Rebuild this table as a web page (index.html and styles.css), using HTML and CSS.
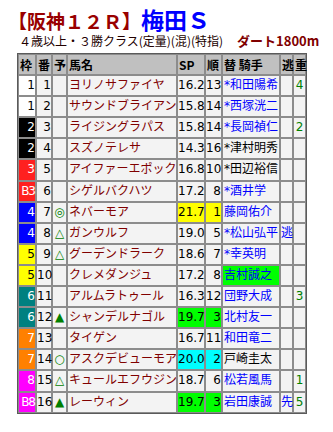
FILE: index.html
```html
<!DOCTYPE html>
<html lang="ja">
<head>
<meta charset="utf-8">
<title>梅田S</title>
<link rel="stylesheet" href="styles.css">
</head>
<body>
<div class="title"><span class="race">【阪神１２Ｒ】</span><span class="rname">梅田Ｓ</span></div>
<div class="sub"><span class="cond">４歳以上・３勝クラス(定量)(混)(特指)</span><span class="dist">ダート1800m</span></div>
<table class="card">
<thead>
<tr>
<th class="c-w">枠</th><th class="c-n">番</th><th class="c-m">予</th><th class="c-h">馬名</th><th class="c-sp">SP</th><th class="c-r">順</th><th class="c-j">替 騎手</th><th class="c-e">逃</th><th class="c-g">重</th>
</tr>
</thead>
<tbody>
<tr><td class="wk w1">1</td><td class="num">1</td><td class="mk"></td><td class="nm">ヨリノサファイヤ</td><td class="num">16.2</td><td class="num">13</td><td class="jk">*和田陽希</td><td class="es"></td><td class="gr">4</td></tr>
<tr><td class="wk w1">1</td><td class="num">2</td><td class="mk"></td><td class="nm">サウンドブライアン</td><td class="num">15.8</td><td class="num">14</td><td class="jk">*西塚洸二</td><td class="es"></td><td class="gr"></td></tr>
<tr><td class="wk w2">2</td><td class="num">3</td><td class="mk"></td><td class="nm">ライジングラパス</td><td class="num">15.8</td><td class="num">14</td><td class="jk">*長岡禎仁</td><td class="es"></td><td class="gr">2</td></tr>
<tr><td class="wk w2">2</td><td class="num">4</td><td class="mk"></td><td class="nm">スズノテレサ</td><td class="num">14.3</td><td class="num">16</td><td class="jk bk">*津村明秀</td><td class="es"></td><td class="gr"></td></tr>
<tr><td class="wk w3">3</td><td class="num">5</td><td class="mk"></td><td class="nm">アイファーエポック</td><td class="num">16.8</td><td class="num">10</td><td class="jk bk">*田辺裕信</td><td class="es"></td><td class="gr"></td></tr>
<tr><td class="wk w3 b">B3</td><td class="num">6</td><td class="mk"></td><td class="nm">シゲルバクハツ</td><td class="num">17.2</td><td class="num">8</td><td class="jk">*酒井学</td><td class="es"></td><td class="gr"></td></tr>
<tr><td class="wk w4">4</td><td class="num">7</td><td class="mk">◎</td><td class="nm">ネバーモア</td><td class="num hy">21.7</td><td class="num hy">1</td><td class="jk">藤岡佑介</td><td class="es"></td><td class="gr"></td></tr>
<tr><td class="wk w4">4</td><td class="num">8</td><td class="mk">△</td><td class="nm">ガンウルフ</td><td class="num">19.0</td><td class="num">5</td><td class="jk">*松山弘平</td><td class="es">逃</td><td class="gr"></td></tr>
<tr><td class="wk w5">5</td><td class="num">9</td><td class="mk">△</td><td class="nm">グーデンドラーク</td><td class="num">18.6</td><td class="num">7</td><td class="jk">*幸英明</td><td class="es"></td><td class="gr"></td></tr>
<tr><td class="wk w5">5</td><td class="num">10</td><td class="mk"></td><td class="nm">クレメダンジュ</td><td class="num">17.2</td><td class="num">8</td><td class="jk hg">吉村誠之</td><td class="es"></td><td class="gr"></td></tr>
<tr><td class="wk w6">6</td><td class="num">11</td><td class="mk"></td><td class="nm">アルムラトゥール</td><td class="num">16.3</td><td class="num">12</td><td class="jk">団野大成</td><td class="es"></td><td class="gr">3</td></tr>
<tr><td class="wk w6">6</td><td class="num">12</td><td class="mk">▲</td><td class="nm">シャンデルナゴル</td><td class="num hg">19.7</td><td class="num hg">3</td><td class="jk">北村友一</td><td class="es"></td><td class="gr"></td></tr>
<tr><td class="wk w7">7</td><td class="num">13</td><td class="mk"></td><td class="nm">タイゲン</td><td class="num">16.7</td><td class="num">11</td><td class="jk">和田竜二</td><td class="es"></td><td class="gr"></td></tr>
<tr><td class="wk w7">7</td><td class="num">14</td><td class="mk">○</td><td class="nm">アスクデビューモア</td><td class="num hc">20.0</td><td class="num hc">2</td><td class="jk bk">戸崎圭太</td><td class="es"></td><td class="gr"></td></tr>
<tr><td class="wk w8">8</td><td class="num">15</td><td class="mk">△</td><td class="nm">キュールエフウジン</td><td class="num">18.7</td><td class="num">6</td><td class="jk">松若風馬</td><td class="es"></td><td class="gr">1</td></tr>
<tr><td class="wk w8 b">B8</td><td class="num">16</td><td class="mk">▲</td><td class="nm">レーウィン</td><td class="num hg">19.7</td><td class="num hg">3</td><td class="jk">岩田康誠</td><td class="es">先</td><td class="gr">5</td></tr>
</tbody>
</table>
</body>
</html>
```

FILE: styles.css
```css
body {
  margin: 8px;
  background: #ffffff;
  color: #000000;
  font-family: "DejaVu Sans", "Noto Sans CJK JP", sans-serif;
}

.title {
  height: 22px;
  line-height: 22px;
  font-family: "Noto Sans CJK JP", sans-serif;
  font-weight: bold;
  white-space: nowrap;
}

.race {
  font-size: 19px;
  color: #990000;
}

.rname {
  font-size: 23px;
  color: #0000ff;
}

.sub {
  margin-top: 3px;
  padding-left: 11px;
  font-family: "Noto Sans CJK JP", sans-serif;
  font-size: 12px;
  line-height: 16px;
  white-space: nowrap;
}

.cond {
  color: #220000;
}

.dist {
  margin-left: 14px;
  font-size: 13px;
  color: #800000;
  font-weight: bold;
}

.card {
  margin: 4px 0 0 9px;
  width: 290px;
  table-layout: fixed;
  border-collapse: separate;
  border-spacing: 0;
  border: 1px solid #5a5a5a;
  font-size: 12px;
}

.card th,
.card td {
  box-sizing: border-box;
  border: 1px solid #8c8c8c;
  padding: 1px 0;
  line-height: 17.1px;
  white-space: nowrap;
  background: #f3f3f3;
}

.card th {
  background: #c0c0c0;
  font-weight: bold;
  text-align: left;
  padding-left: 1px;
  font-family: "Noto Sans CJK JP", sans-serif;
}

.c-w { width: 18px; }
.c-n { width: 16px; }
.c-m { width: 15px; }
.c-h { width: 110px; }
.c-sp { width: 28px; }
.c-r { width: 17px; }
.c-j { width: 58px; }
.c-e { width: 13px; }
.c-g { width: 13px; }

.card .num {
  text-align: right;
}

.card .wk {
  text-align: right;
  color: #ffffff;
}

.card .b {
  letter-spacing: -1px;
}

.card .w1 { background: #ffffff; color: #000000; }
.card .w2 { background: #000000; }
.card .w3 { background: #ff2020; }
.card .w4 { background: #0000ff; }
.card .w5 { background: #ffff00; color: #000000; }
.card .w6 { background: #008080; }
.card .w7 { background: #ff8000; }
.card .w8 { background: #ff00ff; }

.card .mk {
  text-align: center;
  color: #008000;
}

.card .nm {
  overflow: hidden;
  padding-left: 1px;
  color: #800000;
}

.card .jk {
  padding-left: 1px;
  color: #0000ff;
}

.card .jk.bk {
  color: #000000;
}

.card .es {
  text-align: center;
  color: #0000ff;
}

.card .gr {
  text-align: center;
  color: #008000;
}

.card .hy { background: #ffff00; }
.card .hg { background: #00ff00; }
.card .hc { background: #00ffff; }
```
